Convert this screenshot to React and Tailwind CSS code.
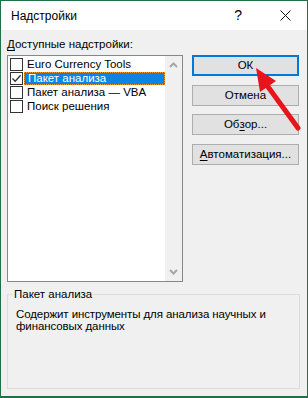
const font = { fontFamily: '"Liberation Sans", "Noto Sans", sans-serif' }

function Checkbox({ checked }) {
  return (
    <span className="ml-[2px] flex h-[13px] w-[13px] shrink-0 items-center justify-center border border-[#333] bg-white">
      {checked && (
        <svg width="11" height="11" viewBox="0 0 11 11">
          <path d="M1.5 5.5 L4.2 8.3 L9.6 2.2" fill="none" stroke="#333" strokeWidth="1.3" />
        </svg>
      )}
    </span>
  )
}

function Item({ label, checked, selected }) {
  return (
    <div className="flex h-[14px] items-center">
      <Checkbox checked={checked} />
      <span
        className={
          'ml-[1px] flex h-[13px] flex-1 items-center pl-[3px] text-[11.5px] leading-[13px] whitespace-nowrap ' +
          (selected ? 'border border-dotted border-[#f29a2e] bg-[#0a84e6] text-white' : 'text-black')
        }
      >
        {label}
      </span>
    </div>
  )
}

function Btn({ children, primary, className = '' }) {
  return (
    <button
      className={
        'flex h-[21px] w-full items-center justify-center bg-[#e1e1e1] text-[11.5px] text-black ' +
        (primary ? 'border-2 border-[#0078d7]' : 'border border-[#adadad]') +
        ' ' + className
      }
    >
      {children}
    </button>
  )
}

export default function App() {
  return (
    <div
      className="relative flex h-[398px] w-[308px] flex-col border-x border-t border-b-2 border-[#1e7145] bg-[#f0f0f0] text-black"
      style={font}
    >
      {/* title bar */}
      <div className="flex h-[29px] shrink-0 items-center bg-white pl-[10px]">
        <span className="text-[12px]">Надстройки</span>
        <span className="ml-auto mr-[38px] text-[14px]">?</span>
        <svg className="mr-[16px]" width="11" height="11" viewBox="0 0 11 11">
          <path d="M0.5 0.5 L10.5 10.5 M10.5 0.5 L0.5 10.5" stroke="#111" strokeWidth="1" />
        </svg>
      </div>

      <div className="flex flex-1 flex-col px-[6px] pt-[6px]">
        <div className="h-[16px] text-[11.5px] leading-[16px]">
          <span className="underline underline-offset-2">Д</span>оступные надстройки:
        </div>

        <div className="mt-[3px] flex">
          {/* list box */}
          <div className="flex h-[227px] w-[176px] border border-[#828790] bg-white">
            <div className="flex flex-1 flex-col pt-[1px]">
              <Item label="Euro Currency Tools" />
              <Item label="Пакет анализа" checked selected />
              <Item label="Пакет анализа — VBA" />
              <Item label="Поиск решения" />
            </div>
            <div className="flex w-[17px] flex-col items-center justify-between bg-[#f0f0f0] py-[6px]">
              <svg width="9" height="6" viewBox="0 0 9 6">
                <path d="M1 5 L4.5 1.5 L8 5" fill="none" stroke="#a6a6a6" strokeWidth="2" />
              </svg>
              <svg width="9" height="6" viewBox="0 0 9 6">
                <path d="M1 1 L4.5 4.5 L8 1" fill="none" stroke="#a6a6a6" strokeWidth="2" />
              </svg>
            </div>
          </div>

          {/* buttons */}
          <div className="ml-[9px] flex w-[107px] flex-col">
            <Btn primary>ОК</Btn>
            <Btn className="mt-[9px]">Отмена</Btn>
            <Btn className="mt-[8px]">
              Об<span className="underline underline-offset-2">з</span>ор...
            </Btn>
            <Btn className="mt-[9px]">
              <span className="underline underline-offset-2">А</span>втоматизация...
            </Btn>
          </div>
        </div>

        <fieldset className="mt-[4px] h-[103px] w-[293px] border border-[#dcdcdc] pl-[8px]">
          <legend className="-ml-[3px] px-[1px] text-[11.5px] leading-[16px]">Пакет анализа</legend>
          <div className="mt-[6px] whitespace-nowrap text-[11.5px] leading-[12px] tracking-[-0.1px]">
            Содержит инструменты для анализа научных и
            <br />
            финансовых данных
          </div>
        </fieldset>
      </div>

      {/* red arrow */}
      <svg className="pointer-events-none absolute left-0 top-0" width="308" height="398">
        <line x1="297" y1="127" x2="265" y2="83" stroke="#e8141c" strokeWidth="5" strokeLinecap="round" />
        <polygon points="255,67 275,80 259,91" fill="#e8141c" />
      </svg>
    </div>
  )
}
